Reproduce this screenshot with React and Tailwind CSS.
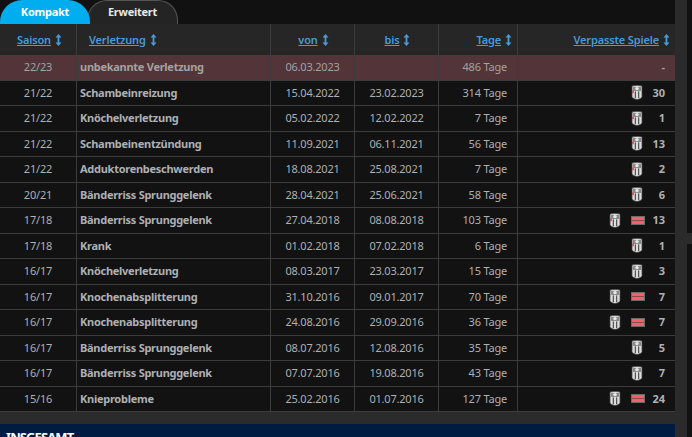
const rows = [
  { saison: '22/23', name: 'unbekannte Verletzung', von: '06.03.2023', bis: '', tage: '486 Tage', spiele: '-', current: true },
  { saison: '21/22', name: 'Schambeinreizung', von: '15.04.2022', bis: '23.02.2023', tage: '314 Tage', spiele: '30', crest: true },
  { saison: '21/22', name: 'Knöchelverletzung', von: '05.02.2022', bis: '12.02.2022', tage: '7 Tage', spiele: '1', crest: true },
  { saison: '21/22', name: 'Schambeinentzündung', von: '11.09.2021', bis: '06.11.2021', tage: '56 Tage', spiele: '13', crest: true },
  { saison: '21/22', name: 'Adduktorenbeschwerden', von: '18.08.2021', bis: '25.08.2021', tage: '7 Tage', spiele: '2', crest: true },
  { saison: '20/21', name: 'Bänderriss Sprunggelenk', von: '28.04.2021', bis: '25.06.2021', tage: '58 Tage', spiele: '6', crest: true },
  { saison: '17/18', name: 'Bänderriss Sprunggelenk', von: '27.04.2018', bis: '08.08.2018', tage: '103 Tage', spiele: '13', crest: true, flag: true },
  { saison: '17/18', name: 'Krank', von: '01.02.2018', bis: '07.02.2018', tage: '6 Tage', spiele: '1', crest: true },
  { saison: '16/17', name: 'Knöchelverletzung', von: '08.03.2017', bis: '23.03.2017', tage: '15 Tage', spiele: '3', crest: true, plain: true },
  { saison: '16/17', name: 'Knochenabsplitterung', von: '31.10.2016', bis: '09.01.2017', tage: '70 Tage', spiele: '7', crest: true, plain: true, flag: true },
  { saison: '16/17', name: 'Knochenabsplitterung', von: '24.08.2016', bis: '29.09.2016', tage: '36 Tage', spiele: '7', crest: true, plain: true, flag: true },
  { saison: '16/17', name: 'Bänderriss Sprunggelenk', von: '08.07.2016', bis: '12.08.2016', tage: '35 Tage', spiele: '5', crest: true, plain: true },
  { saison: '16/17', name: 'Bänderriss Sprunggelenk', von: '07.07.2016', bis: '19.08.2016', tage: '43 Tage', spiele: '7', crest: true, plain: true },
  { saison: '15/16', name: 'Knieprobleme', von: '25.02.2016', bis: '01.07.2016', tage: '127 Tage', spiele: '24', crest: true, plain: true, flag: true },
]

const gridCols = 'grid grid-cols-[76px_1px_193px_1px_83px_1px_83px_1px_78px_1px_157px]'

function SortIcon() {
  return (
    <svg width="7" height="12" viewBox="0 0 7 12" className="shrink-0" fill="#4a9ad8">
      <path d="M3.5 0 L6.5 3.4 H4.4 V8.6 H6.5 L3.5 12 L0.5 8.6 H2.6 V3.4 H0.5 Z" />
    </svg>
  )
}

function Crest({ plain }) {
  return (
    <svg width="12" height="15" viewBox="0 0 12 15" className="shrink-0">
      <path d="M1 1 Q6 -0.3 11 1 V11.5 Q11 13.8 6 14.6 Q1 13.8 1 11.5 Z" fill="#dcdcdc" stroke="#444444" strokeWidth="0.8" />
      <rect x="2" y="2" width="8" height="4" fill="#8a8a8a" />
      <circle cx="6" cy="3.6" r="1.7" fill="#e8e8e8" />
      <rect x="3.8" y="6.4" width="1" height="6.6" fill="#333333" />
      <rect x="7.2" y="6.4" width="1" height="6.6" fill="#333333" />
      {!plain && <rect x="1.3" y="5.6" width="1.5" height="2.6" fill="#d8404c" />}
    </svg>
  )
}

function Flag() {
  return (
    <svg width="14" height="9" viewBox="0 0 14 9" className="shrink-0">
      <rect width="14" height="9" fill="#6a6a6a" />
      <rect x="1" y="1" width="12" height="7" fill="#f0606e" />
      <rect x="1" y="4" width="12" height="1" fill="#8a4a52" />
    </svg>
  )
}

function HeaderCell({ label, className }) {
  return (
    <div className={`flex items-center gap-[4px] pt-[1px] ${className}`}>
      <span className="font-semibold tracking-[-0.15px] text-[#4a9ad8] underline">{label}</span>
      <SortIcon />
    </div>
  )
}

function Divider() {
  return <div className="bg-[#3c3c3c]" />
}

function Row({ row }) {
  return (
    <div className={`${gridCols} h-[25.5px] border-b border-[#3c3c3c] ${row.current ? 'bg-[#533438] text-[#a2a2a2]' : 'text-[#adb0b4]'}`}>
      <div className="flex items-center justify-center tracking-[-0.2px]">{row.saison}</div>
      <Divider />
      <div className="flex items-center pl-[3px] font-bold tracking-[-0.27px]">{row.name}</div>
      <Divider />
      <div className="flex items-center justify-center tracking-[-0.2px]">{row.von}</div>
      <Divider />
      <div className="flex items-center justify-center tracking-[-0.2px]">{row.bis}</div>
      <Divider />
      <div className="flex items-center justify-end pr-[10px] tracking-[-0.2px]">{row.tage}</div>
      <Divider />
      <div className="flex items-center justify-end pr-[10px] font-bold">
        {row.crest && (
          <div className={row.flag ? 'mr-[10px]' : 'w-[14px]'}>
            <Crest plain={row.plain} />
          </div>
        )}
        {row.flag && <Flag />}
        <span className="w-[20px] text-right">{row.spiele}</span>
      </div>
    </div>
  )
}

export default function App() {
  return (
    <div className="flex h-[437px] w-[692px] overflow-hidden bg-[#2b2b2b] font-['Noto_Sans','Liberation_Sans',sans-serif] text-[11px]">
      <div className="w-[675px] shrink-0">
        {/* Tabs */}
        <div className="flex h-[24px] items-end bg-[#111111] font-bold tracking-[-0.25px] text-white">
          <div className="z-10 flex h-[24px] w-[90px] items-center justify-center rounded-t-[22px] bg-[#00aeef]">Kompakt</div>
          <div className="-ml-[3px] flex h-[24px] w-[91px] items-center justify-center rounded-t-[20px] border border-b-0 border-[#555555] bg-[#242424] text-[#e8e8e8]">Erweitert</div>
        </div>

        {/* Table */}
        <div className="bg-[#121212]">
          <div className={`${gridCols} h-[31px] bg-[#262626]`}>
            <HeaderCell label="Saison" className="justify-center pl-[3px]" />
            <Divider />
            <HeaderCell label="Verletzung" className="pl-[12px]" />
            <Divider />
            <HeaderCell label="von" className="justify-center pl-[2px]" />
            <Divider />
            <HeaderCell label="bis" className="justify-center pl-[2px]" />
            <Divider />
            <HeaderCell label="Tage" className="justify-end pr-[5px]" />
            <Divider />
            <HeaderCell label="Verpasste Spiele" className="justify-end pr-[5px]" />
          </div>
          {rows.map((row, i) => (
            <Row key={i} row={row} />
          ))}
        </div>

        {/* Summary box, cut off by the window */}
        <div className="mt-[12px] h-[40px] bg-[#001b41] pl-[6px] pt-[4px] text-[13px] leading-[18px] font-bold tracking-[-0.9px] text-white">INSGESAMT</div>
      </div>

      {/* Right gutter with neighbouring boxes */}
      <div className="ml-[12px] flex w-[5px] flex-col">
        <div className="h-[233px] bg-[#121212]" />
        <div className="mt-[11px] flex-1 bg-[#121212]" />
      </div>
    </div>
  )
}
